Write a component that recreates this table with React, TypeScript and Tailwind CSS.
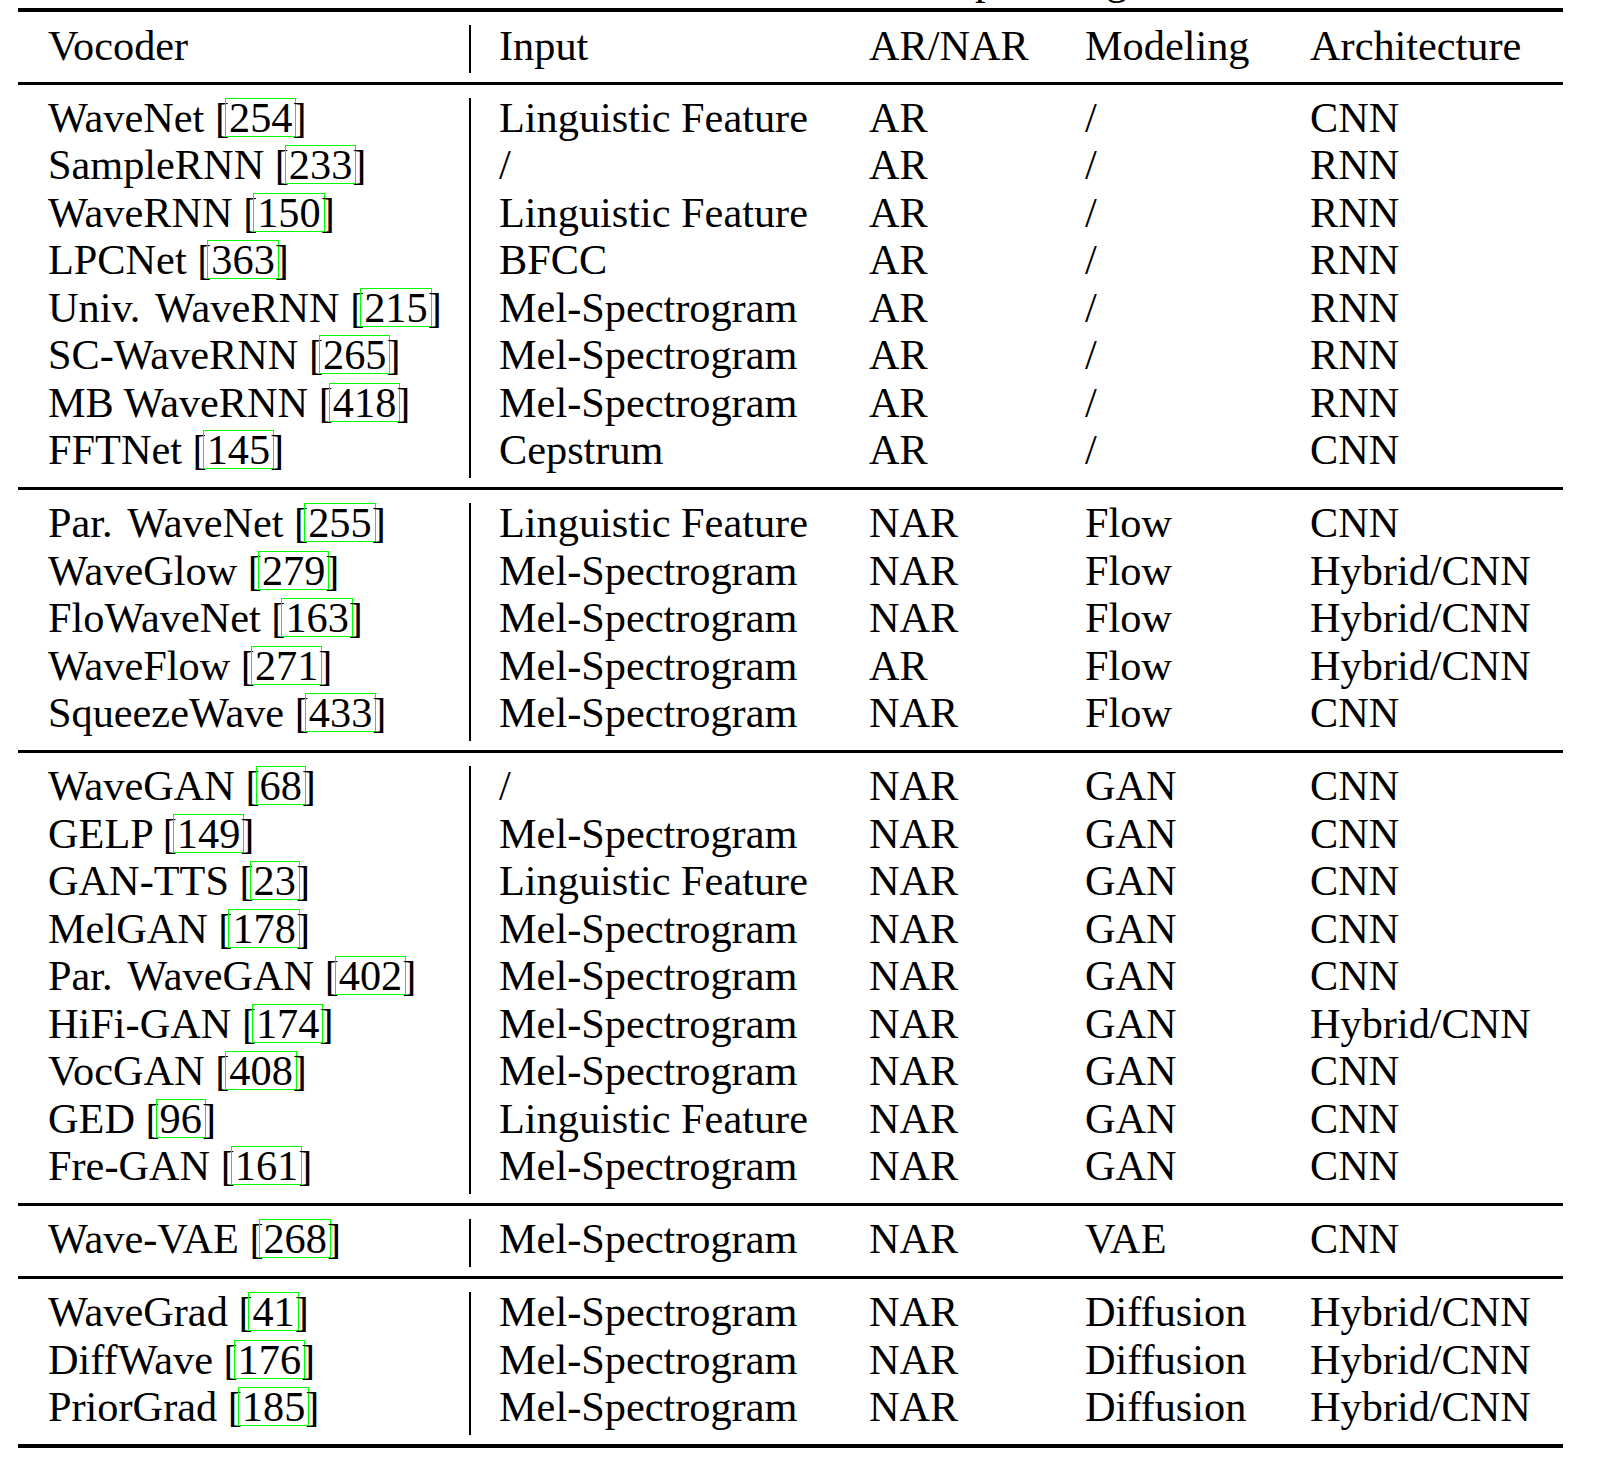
import React from 'react';

type Row = [string, number, string, string, string, string];

const sections: Row[][] = [
  [
    ['WaveNet', 254, 'Linguistic Feature', 'AR', '/', 'CNN'],
    ['SampleRNN', 233, '/', 'AR', '/', 'RNN'],
    ['WaveRNN', 150, 'Linguistic Feature', 'AR', '/', 'RNN'],
    ['LPCNet', 363, 'BFCC', 'AR', '/', 'RNN'],
    ['Univ. WaveRNN', 215, 'Mel-Spectrogram', 'AR', '/', 'RNN'],
    ['SC-WaveRNN', 265, 'Mel-Spectrogram', 'AR', '/', 'RNN'],
    ['MB WaveRNN', 418, 'Mel-Spectrogram', 'AR', '/', 'RNN'],
    ['FFTNet', 145, 'Cepstrum', 'AR', '/', 'CNN'],
  ],
  [
    ['Par. WaveNet', 255, 'Linguistic Feature', 'NAR', 'Flow', 'CNN'],
    ['WaveGlow', 279, 'Mel-Spectrogram', 'NAR', 'Flow', 'Hybrid/CNN'],
    ['FloWaveNet', 163, 'Mel-Spectrogram', 'NAR', 'Flow', 'Hybrid/CNN'],
    ['WaveFlow', 271, 'Mel-Spectrogram', 'AR', 'Flow', 'Hybrid/CNN'],
    ['SqueezeWave', 433, 'Mel-Spectrogram', 'NAR', 'Flow', 'CNN'],
  ],
  [
    ['WaveGAN', 68, '/', 'NAR', 'GAN', 'CNN'],
    ['GELP', 149, 'Mel-Spectrogram', 'NAR', 'GAN', 'CNN'],
    ['GAN-TTS', 23, 'Linguistic Feature', 'NAR', 'GAN', 'CNN'],
    ['MelGAN', 178, 'Mel-Spectrogram', 'NAR', 'GAN', 'CNN'],
    ['Par. WaveGAN', 402, 'Mel-Spectrogram', 'NAR', 'GAN', 'CNN'],
    ['HiFi-GAN', 174, 'Mel-Spectrogram', 'NAR', 'GAN', 'Hybrid/CNN'],
    ['VocGAN', 408, 'Mel-Spectrogram', 'NAR', 'GAN', 'CNN'],
    ['GED', 96, 'Linguistic Feature', 'NAR', 'GAN', 'CNN'],
    ['Fre-GAN', 161, 'Mel-Spectrogram', 'NAR', 'GAN', 'CNN'],
  ],
  [['Wave-VAE', 268, 'Mel-Spectrogram', 'NAR', 'VAE', 'CNN']],
  [
    ['WaveGrad', 41, 'Mel-Spectrogram', 'NAR', 'Diffusion', 'Hybrid/CNN'],
    ['DiffWave', 176, 'Mel-Spectrogram', 'NAR', 'Diffusion', 'Hybrid/CNN'],
    ['PriorGrad', 185, 'Mel-Spectrogram', 'NAR', 'Diffusion', 'Hybrid/CNN'],
  ],
];

// latex puts a wider space after an abbreviation's period
const Name = ({ text }: { text: string }) => {
  const m = text.match(/^(\w+\.) (.*)$/);
  if (!m) return <>{text}</>;
  return (
    <>
      {m[1]} <span className="ml-[4px]">{m[2]}</span>
    </>
  );
};

// hyperref style link box round the citation number
const Cite = ({ n }: { n: number }) => (
  <>
    [<span className="-mx-[4px] inline-block h-[39px] border border-[#00ff00] px-[3px] leading-[37px]">{n}</span>]
  </>
);

const line = 'h-[47.5px] leading-[47.5px] whitespace-nowrap';

const App: React.FC = () => {
  return (
    <div className="min-h-screen bg-white font-['Liberation_Serif','Times_New_Roman',serif] text-[42.3px] text-black">
      <div className="ml-[18px] w-[1545px]">
        {/* tail of the caption line, cut off by the crop */}
        <div className="h-[8px] overflow-hidden">
          <div className="-mt-[44px] flex h-[47.5px] leading-[47.5px]">
            <span className="ml-[957px]">p</span>
            <span className="ml-[110px]">g</span>
          </div>
        </div>
        <div className="h-[4px] bg-black" />

        {/* header */}
        <div className="flex pt-[13px] pb-[9px]">
          <div className="-mt-[3px] mb-[3px] w-[451px] pl-[30px]">
            <div className={line}>Vocoder</div>
          </div>
          <div className="w-[2px] bg-black" />
          <div className="-mt-[3px] mb-[3px] flex flex-1 pl-[28px]">
            <div className={`${line} w-[370px]`}>Input</div>
            <div className={`${line} w-[216px]`}>AR/NAR</div>
            <div className={`${line} w-[225px]`}>Modeling</div>
            <div className={line}>Architecture</div>
          </div>
        </div>
        <div className="h-[3px] bg-black" />

        {sections.map((rows, si) => (
          <div key={si}>
            <div className="flex pt-[13px] pb-[9px]">
              <div className="-mt-[4px] mb-[4.5px] w-[451px] pl-[30px]">
                {rows.map((r) => (
                  <div key={r[0]} className={line}>
                    <Name text={r[0]} /> <Cite n={r[1]} />
                  </div>
                ))}
              </div>
              <div className="w-[2px] bg-black" />
              <div className="-mt-[4px] mb-[4.5px] flex-1 pl-[28px]">
                {rows.map((r) => (
                  <div key={r[0]} className="flex">
                    <div className={`${line} w-[370px]`}>{r[2]}</div>
                    <div className={`${line} w-[216px]`}>{r[3]}</div>
                    <div className={`${line} w-[225px]`}>{r[4]}</div>
                    <div className={line}>{r[5]}</div>
                  </div>
                ))}
              </div>
            </div>
            <div className={si === sections.length - 1 ? 'h-[4px] bg-black' : 'h-[3px] bg-black'} />
          </div>
        ))}
      </div>
    </div>
  );
};

export default App;
